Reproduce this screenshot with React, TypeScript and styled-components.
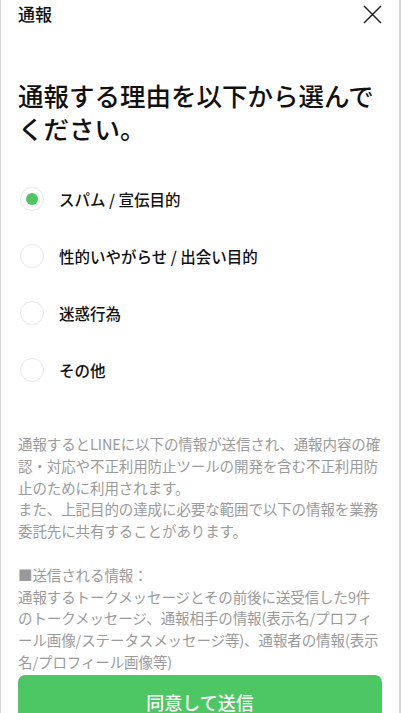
import React, { useState } from "react";
import styled, { createGlobalStyle } from "styled-components";

const Global = createGlobalStyle`
  html, body { margin: 0; padding: 0; background: #fff; }
  body { font-family: "Noto Sans CJK JP", "Noto Sans", sans-serif; }
  * { box-sizing: border-box; }
`;

const Sheet = styled.div`
  width: 401px;
  height: 713px;
  overflow: hidden;
  background: #fff;
  border-left: 1px solid #d4d4d4;
  border-right: 2px solid #d4d4d4;
  display: flex;
  flex-direction: column;
  padding: 0 17px;
`;

const Header = styled.header`
  height: 28px;
  flex: none;
  display: flex;
  align-items: center;
  justify-content: space-between;
`;

const HeaderTitle = styled.h1`
  margin: 0;
  font-size: 17px;
  font-weight: 500;
  color: #111;
  line-height: 24px;
`;

const CloseButton = styled.button`
  border: 0;
  background: none;
  padding: 0;
  width: 20px;
  height: 20px;
  display: flex;
  align-items: center;
  justify-content: center;
  color: #222;
`;

const Heading = styled.h2`
  margin: 50px 0 0;
  font-size: 25.5px;
  line-height: 33px;
  font-weight: 500;
  color: #111;
`;

const Options = styled.ul`
  list-style: none;
  margin: 26px 0 0;
  padding: 0;
`;

const Option = styled.li`
  height: 57px;
  display: flex;
  align-items: center;
  gap: 15px;
  padding-left: 2px;
  cursor: pointer;
`;

const Radio = styled.span<{ $on: boolean }>`
  flex: none;
  width: 24px;
  height: 24px;
  border-radius: 50%;
  border: 1.5px solid #e8e8e8;
  display: flex;
  align-items: center;
  justify-content: center;
  &::after {
    content: "";
    width: 12px;
    height: 12px;
    border-radius: 50%;
    background: ${(p) => (p.$on ? "#4cc764" : "transparent")};
  }
`;

const OptionLabel = styled.span`
  font-size: 15.5px;
  font-weight: 500;
  color: #111;
`;

const Notice = styled.p`
  margin: 35px 0 0;
  font-size: 14.5px;
  line-height: 21.8px;
  color: #9a9a9a;
  white-space: nowrap;
  letter-spacing: -0.1px;
`;

const SubmitButton = styled.button`
  margin-top: 2px;
  flex: none;
  height: 54px;
  border: 0;
  border-radius: 7px;
  background: #4cc764;
  color: #fff;
  font-family: inherit;
  font-size: 18px;
  font-weight: 500;
`;

const reasons = ["スパム / 宣伝目的", "性的いやがらせ / 出会い目的", "迷惑行為", "その他"];

const lines = [
  "通報するとLINEに以下の情報が送信され、通報内容の確",
  "認・対応や不正利用防止ツールの開発を含む不正利用防",
  "止のために利用されます。",
  "また、上記目的の達成に必要な範囲で以下の情報を業務",
  "委託先に共有することがあります。",
  "",
  "■送信される情報：",
  "通報するトークメッセージとその前後に送受信した9件",
  "のトークメッセージ、通報相手の情報(表示名/プロフィ",
  "ール画像/ステータスメッセージ等)、通報者の情報(表示",
  "名/プロフィール画像等)",
];

export default function App() {
  const [sel, setSel] = useState(0);
  return (
    <>
      <Global />
      <Sheet>
        <Header>
          <HeaderTitle>通報</HeaderTitle>
          <CloseButton aria-label="close">
            <svg width="19" height="19" viewBox="0 0 19 19">
              <path d="M1 1 L18 18 M18 1 L1 18" stroke="#222" strokeWidth="1.5" />
            </svg>
          </CloseButton>
        </Header>
        <Heading>通報する理由を以下から選んでください。</Heading>
        <Options>
          {reasons.map((r, i) => (
            <Option key={r} onClick={() => setSel(i)}>
              <Radio $on={sel === i} />
              <OptionLabel>{r}</OptionLabel>
            </Option>
          ))}
        </Options>
        <Notice>
          {lines.map((l, i) => (
            <React.Fragment key={i}>
              {l}
              {i < lines.length - 1 && <br />}
            </React.Fragment>
          ))}
        </Notice>
        <SubmitButton>同意して送信</SubmitButton>
      </Sheet>
    </>
  );
}
